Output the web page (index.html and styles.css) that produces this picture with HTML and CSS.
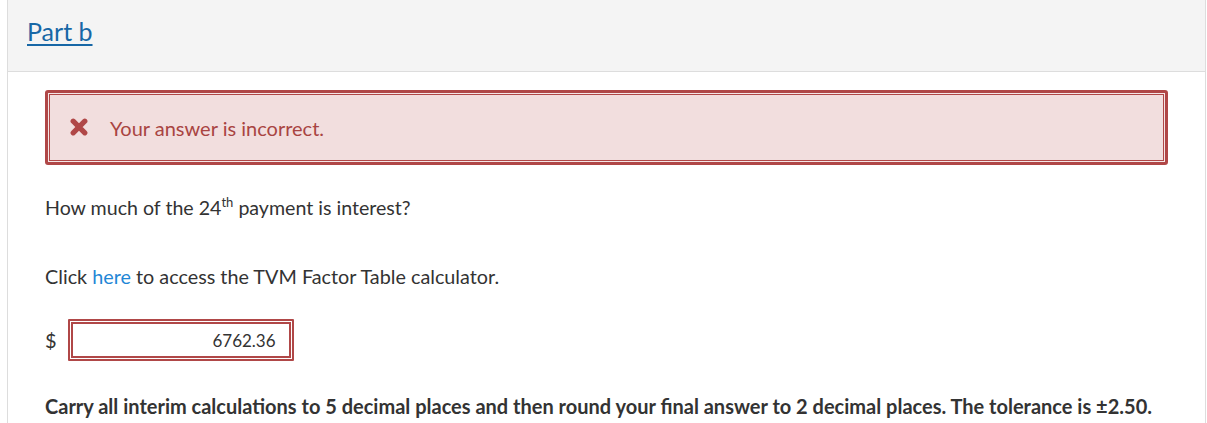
FILE: index.html
```html
<!DOCTYPE html>
<html lang="en">
<head>
  <meta charset="UTF-8"/>
  <title>Part b</title>
  <link rel="stylesheet" href="styles.css">
</head>
<body>

  <div class="part">
    <div class="part-head">
      <a href="#" class="part-title">Part b</a>
    </div>

    <div class="part-body">
      <div class="feedback">
        <svg class="x-icon" viewBox="0 0 18 18" width="18" height="18">
          <path d="M3.2 3.2 L14.8 14.8 M14.8 3.2 L3.2 14.8" stroke="#b04747" stroke-width="5.2" stroke-linecap="round"/>
        </svg>
        <span>Your answer is incorrect.</span>
      </div>

      <p class="question">How much of the 24<sup>th</sup> payment is interest?</p>
      <p class="calc">Click <a href="#">here</a> to access the TVM Factor Table calculator.</p>

      <div class="answer">
        <span class="unit">$</span>
        <input class="answer-input" type="text" value="6762.36">
      </div>

      <p class="note">Carry all interim calculations to 5 decimal places and then round your final answer to 2 decimal places. The tolerance is ±2.50.</p>
    </div>
  </div>

</body>
</html>
```

FILE: styles.css
```css
html, body { margin:0; padding:0; background:#fff; }
body { font-family:Lato, "Open Sans", sans-serif; color:#333; }

.part {
  margin:0 1px 0 7px;
  border-left:1px solid #ddd; border-right:1px solid #ddd;
  height:423px; box-sizing:border-box;
}
.part-head {
  background:#f4f4f4; border-bottom:1px solid #ddd;
  height:72px; box-sizing:border-box;
  padding:15px 19px 0;
}
.part-title { font-size:25px; line-height:33px; color:#1767a6; text-decoration:underline; text-underline-offset:3px; }

.part-body { padding:18px 37px 0; }

.feedback {
  display:flex; align-items:center; gap:22px;
  height:75px; box-sizing:border-box;
  padding-left:22px;
  background:#f2dede; color:#a94442;
  border:3px solid #b04747; border-radius:3px;
  box-shadow:inset 0 0 0 1px #f5e6e6, inset 0 0 0 2px #b04747;
  font-size:20px; margin-bottom:28px;
}
.x-icon { flex:none; margin-top:-1px; }

p { margin:0; font-size:20px; line-height:30px; }
sup { font-size:13px; line-height:0; }
.question { font-size:19.6px; margin-bottom:38px; }
.calc { font-size:19.8px; margin-bottom:28px; }
.calc a { color:#1f87d6; text-decoration:none; }

.answer { display:flex; align-items:center; gap:11px; margin-bottom:30px; }
.unit { font-size:20px; }
.answer-input {
  width:226px; height:42px; box-sizing:border-box;
  border:2px solid #b04747; border-radius:1px;
  box-shadow:inset 0 0 0 1px #fff, inset 0 0 0 3px #b04747;
  padding:0 16px; text-align:right;
  font-family:Lato, sans-serif; font-size:17px; color:#333;
  outline:none; background:#fff;
}

.note { font-weight:bold; }
```
